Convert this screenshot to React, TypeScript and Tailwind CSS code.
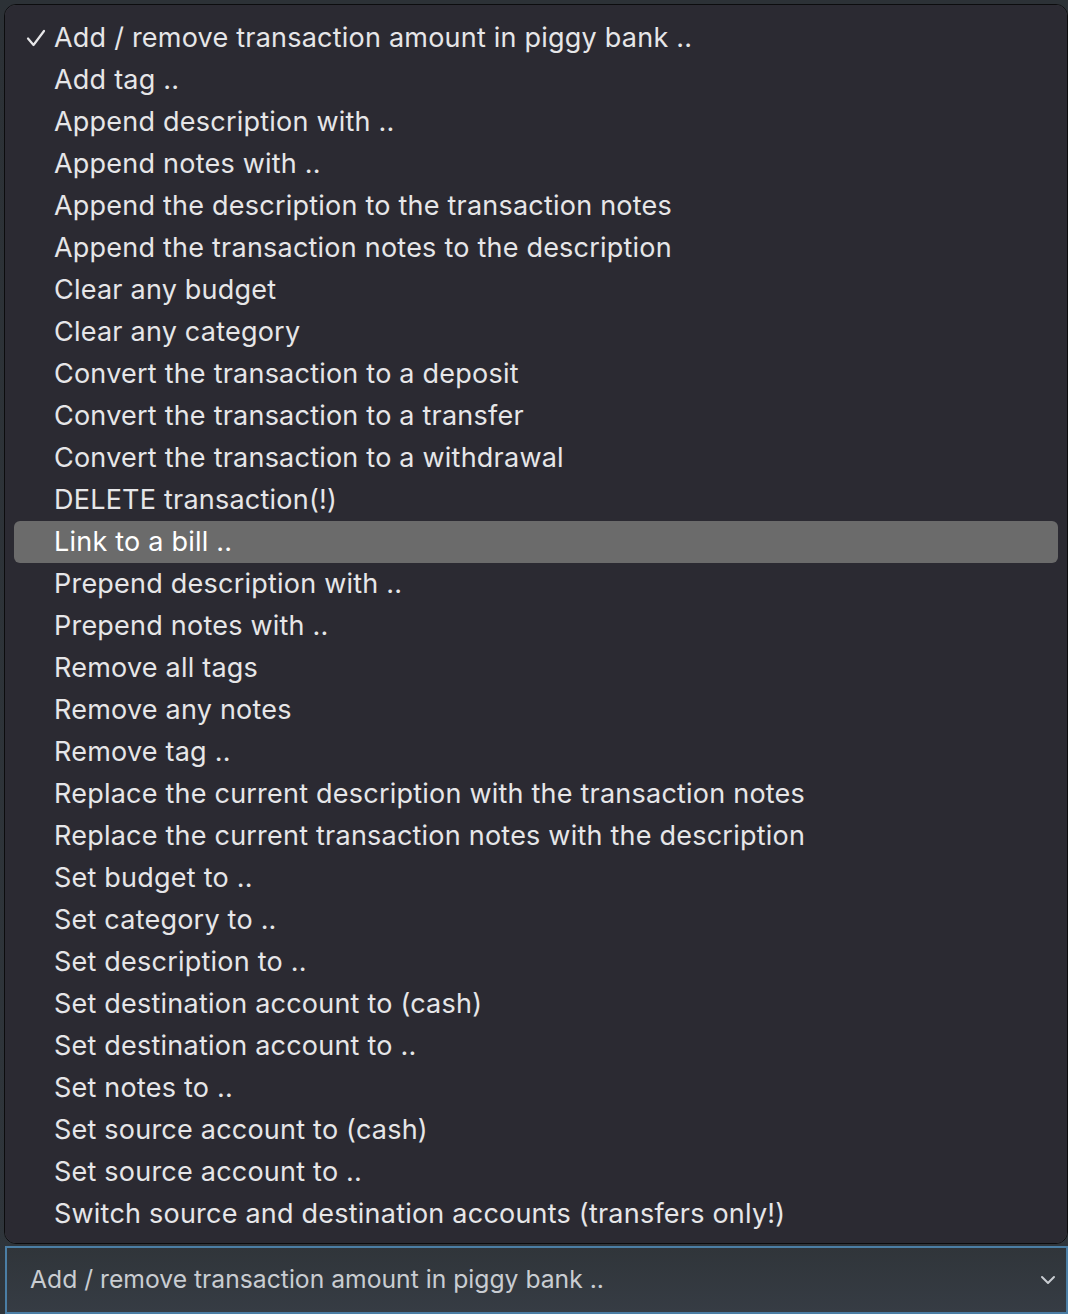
import React from "react";

const items = [
  "Add / remove transaction amount in piggy bank ..",
  "Add tag ..",
  "Append description with ..",
  "Append notes with ..",
  "Append the description to the transaction notes",
  "Append the transaction notes to the description",
  "Clear any budget",
  "Clear any category",
  "Convert the transaction to a deposit",
  "Convert the transaction to a transfer",
  "Convert the transaction to a withdrawal",
  "DELETE transaction(!)",
  "Link to a bill ..",
  "Prepend description with ..",
  "Prepend notes with ..",
  "Remove all tags",
  "Remove any notes",
  "Remove tag ..",
  "Replace the current description with the transaction notes",
  "Replace the current transaction notes with the description",
  "Set budget to ..",
  "Set category to ..",
  "Set description to ..",
  "Set destination account to (cash)",
  "Set destination account to ..",
  "Set notes to ..",
  "Set source account to (cash)",
  "Set source account to ..",
  "Switch source and destination accounts (transfers only!)",
];

export default function App() {
  return (
    <div
      className="w-[1068px] h-[1314px] overflow-hidden bg-gradient-to-b from-[#2c3136] to-[#2f353b] flex flex-col"
      style={{ fontFamily: "Inter, 'Noto Sans', sans-serif" }}
    >
      <div className="h-[4px] shrink-0" />
      <div className="ml-[4px] w-[1064px] h-[1240px] shrink-0 rounded-[12px] border border-[#0c0c0e] shadow-[inset_0_0_0_1px_#5f5f63]">
        <div className="w-full h-full rounded-[11px] bg-[#2b2a32] pt-[12px] px-[9px]">
          {items.map((t, i) => {
            const sel = i === 12;
            return (
              <div
                key={i}
                className={`h-[42px] flex items-center rounded-[6px] ${sel ? "bg-[#6b6b6b] text-white" : "text-[#e6e6e8]"}`}
              >
                <div className="w-[40px] shrink-0 flex items-center justify-center">
                  {i === 0 && (
                    <svg width="20" height="18" viewBox="0 0 20 18" className="ml-[3px] -mt-[1px]">
                      <path d="M2 9.5 L7.5 16 L18 2" fill="none" stroke="#e6e6e8" strokeWidth="2.2" strokeLinecap="round" strokeLinejoin="round" />
                    </svg>
                  )}
                </div>
                <span className="text-[27px] leading-none tracking-[0.22px] whitespace-nowrap -mt-[1px]">{t}</span>
              </div>
            );
          })}
        </div>
      </div>
      <div className="mt-[2px] ml-[5px] flex-1 border-2 border-[#4b7ea5] bg-gradient-to-b from-[#30353a] to-[#363c44] flex items-center justify-between pl-[23px] pr-[8px]">
        <span className="text-[24.7px] text-[#c9cdd2] whitespace-nowrap">Add / remove transaction amount in piggy bank ..</span>
        <svg width="16" height="10" viewBox="0 0 16 10" className="mr-[2px]">
          <path d="M2 2 L8 8 L14 2" fill="none" stroke="#c9cdd2" strokeWidth="2" strokeLinecap="round" strokeLinejoin="round" />
        </svg>
      </div>
    </div>
  );
}
